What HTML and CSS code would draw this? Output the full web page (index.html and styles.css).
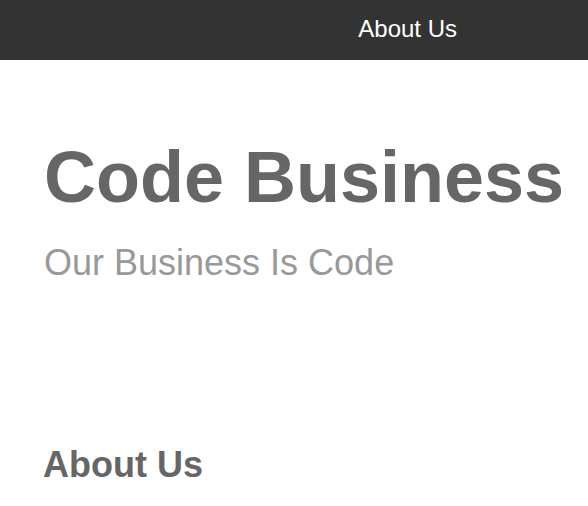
FILE: index.html
```html
<!DOCTYPE html>
<html>
<head>
<meta charset="utf-8">
<link rel="stylesheet" href="styles.css">
</head>
<body>
<header class="topbar">
  <nav class="nav"><a class="nav-link" href="#about">About Us</a></nav>
</header>
<section class="hero">
  <h1 class="title">Code Business</h1>
  <p class="subtitle">Our Business Is Code</p>
</section>
<section class="about" id="about">
  <h2 class="about-title">About Us</h2>
</section>
</body>
</html>
```
FILE: styles.css
```css
html, body {
  margin: 0;
  padding: 0;
  background: #fff;
  font-family: "Liberation Sans", Arial, sans-serif;
}
.topbar {
  height: 60px;
  box-sizing: border-box;
  background: #333;
  display: flex;
  align-items: flex-start;
  justify-content: flex-end;
  padding: 15px 131px 0 0;
}
.nav-link {
  color: #fff;
  text-decoration: none;
  font-size: 24px;
}
.hero {
  padding: 0 44px;
}
.title {
  margin: 76px 0 0;
  font-size: 72px;
  font-weight: bold;
  color: #666;
  line-height: 1.15;
  white-space: nowrap;
}
.subtitle {
  margin: 23px 0 0;
  font-size: 36px;
  color: #999;
}
.about {
  padding: 0 43px;
}
.about-title {
  margin: 160px 0 0;
  font-size: 36px;
  color: #666;
}
```
